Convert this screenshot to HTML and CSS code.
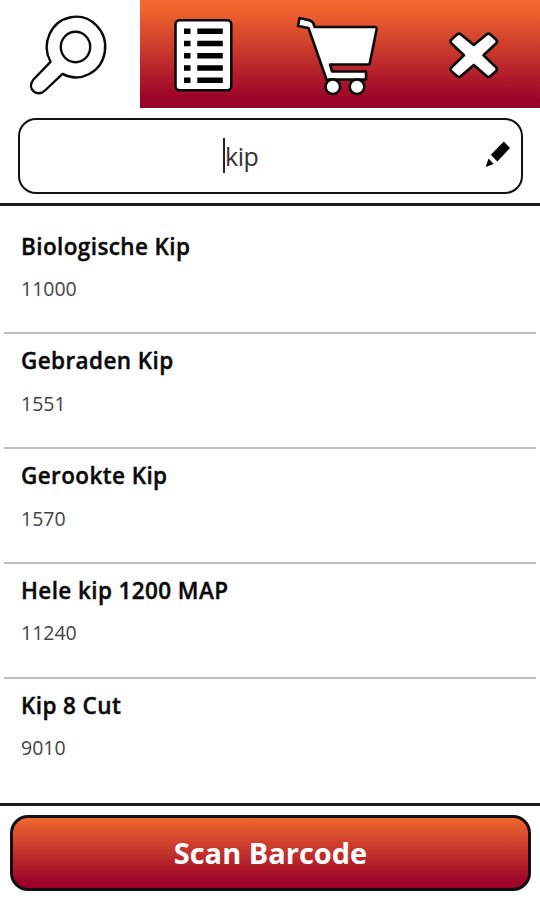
FILE: index.html
```html
<!DOCTYPE html>
<html lang="nl">

<head>
	<meta charset="utf-8">
	<title>Kip</title>
	<link rel="stylesheet" href="styles.css">
</head>

<body>

<nav class="tabs">
	<a class="tab active" href="#" aria-label="Zoeken">
		<svg width="140" height="108" viewBox="0 0 140 108">
			<path class="line" d="M50.5 61.8 A29.2 30.3 0 1 1 62.5 73.9 L45 90.5 C37.5 98 26 89 33.5 79.5 Z"/>
			<ellipse class="line" cx="75.5" cy="47" rx="14.7" ry="15.2"/>
		</svg>
	</a>
	<a class="tab" href="#" aria-label="Lijst">
		<svg width="133" height="108" viewBox="140 0 133 108">
			<rect class="shape" x="175.5" y="20.2" width="55.8" height="70" rx="4"/>
			<path d="M184 28.5h6.5v5.5H184z M184 40.8h6.5v5.5H184z M184 53h6.5v5.5H184z M184 65.3h6.5v5.5H184z M184 77.5h6.5V83H184z"/>
			<path d="M197.3 28.5h25.5v5.5h-25.5z M197.3 40.8h25.5v5.5h-25.5z M197.3 53h25.5v5.5h-25.5z M197.3 65.3h25.5v5.5h-25.5z M197.3 77.5h25.5V83h-25.5z"/>
		</svg>
	</a>
	<a class="tab" href="#" aria-label="Winkelwagen">
		<svg width="134" height="108" viewBox="273 0 134 108">
			<path class="shape" d="M299.5 18 L310 20.5 Q313.5 21.5 314.5 27 L375 27 Q377 27 376.5 30 L369.5 64.5 L330 64.5 L332 71.5 L366 71.5 L366 79.5 L326.5 79.5 L308.5 28 L298 26 Z"/>
			<circle class="shape" cx="332.8" cy="86.7" r="7.3"/>
			<circle class="shape" cx="357" cy="86.7" r="7.3"/>
		</svg>
	</a>
	<a class="tab" href="#" aria-label="Sluiten">
		<svg width="133" height="108" viewBox="407 0 133 108">
			<path class="shape" d="M457 34.5 Q459 32.7 461 34.5 L473.8 45 L486.5 34.5 Q488.5 32.7 490.5 34.5 L496 39.5 Q498 41.5 496 43.5 L483.5 55.3 L496 67.3 Q498 69.3 496 71.3 L490.5 76 Q488.5 77.8 486.5 76 L473.8 65 L461 76 Q459 77.8 457 76 L451.5 71.3 Q449.5 69.3 451.5 67.3 L464 55.3 L451.5 43.5 Q449.5 41.5 451.5 39.5 Z"/>
		</svg>
	</a>
</nav>

<div class="search">
	<div class="field">
		<span class="caret"></span><span class="query">kip</span>
		<svg class="pencil" width="26" height="28" viewBox="484 140 26 28">
			<path d="M503.8 141.5 L510 148 L497.3 161.5 L490.8 154.8 Z M488.5 158.5 L493.7 164 L485.7 167 Z"/>
		</svg>
	</div>
</div>

<ul class="results">
	<li><b class="name">Biologische Kip</b><span class="code">11000</span></li>
	<li><b class="name">Gebraden Kip</b><span class="code">1551</span></li>
	<li><b class="name">Gerookte Kip</b><span class="code">1570</span></li>
	<li><b class="name">Hele kip 1200 MAP</b><span class="code">11240</span></li>
	<li><b class="name">Kip 8 Cut</b><span class="code">9010</span></li>
</ul>

<div class="bottom">
	<button class="scan">Scan Barcode</button>
</div>

</body>

</html>
```
FILE: styles.css
```css
* {
	box-sizing: border-box;
}

body {
	margin: 0;
	width: 540px;
	height: 900px;
	display: flex;
	flex-direction: column;
	overflow: hidden;
	background: #fefefe;
	color: #0a0a0a;
	font-family: "Open Sans", "Noto Sans", sans-serif;
}

/* tabs */
.tabs {
	display: flex;
	height: 108px;
	background: linear-gradient(#f3692f 0, #ee632f 10%, #9b0329 92%, #9b0329 100%);
}

.tab svg {
	display: block;
}

.active {
	background: #fefefe;
}

.line {
	fill: #fefefe;
	stroke: #0a0a0a;
	stroke-width: 2.4;
	stroke-linejoin: round;
}

.shape {
	fill: #fefefe;
	stroke: #0a0a0a;
	stroke-width: 2.6;
	stroke-linejoin: round;
}

/* search */
.search {
	height: 98px;
	padding: 10px 17px 0 18px;
	border-bottom: 3px solid #1c1c1c;
}

.field {
	position: relative;
	display: flex;
	align-items: center;
	height: 76px;
	padding-left: 203px;
	border: 2px solid #111;
	border-radius: 18px;
	font-size: 25px;
}

.caret {
	width: 2px;
	height: 35px;
	margin-bottom: 2px;
	background: #222;
}

.query {
	color: #333;
	letter-spacing: -0.5px;
}

.pencil {
	position: absolute;
	right: 11px;
	top: 20px;
}

/* results */
.results {
	flex: 1;
	margin: 0;
	padding: 13.5px 4px 0;
	list-style: none;
}

.results li {
	height: 114.8px;
	padding: 11px 0 0 17px;
	border-bottom: 2px solid #bdbdbd;
}

.results li:last-child {
	border-bottom: 0;
}

.name {
	display: block;
	font-size: 22.5px;
	font-weight: 600;
	letter-spacing: 0.4px;
	line-height: 32px;
	-webkit-text-stroke: 0.4px #0a0a0a;
}

.code {
	display: block;
	margin-top: 11.5px;
	color: #444;
	font-size: 19.5px;
	line-height: 30px;
}

/* bottom */
.bottom {
	height: 97px;
	padding: 9px 9px 0 10px;
	border-top: 3px solid #1c1c1c;
}

.scan {
	display: block;
	width: 100%;
	height: 76px;
	padding: 0 0 1px;
	border: 3px solid #111;
	border-radius: 18px;
	background: linear-gradient(#f0672f, #9b0329 92%);
	color: #fff;
	font-family: inherit;
	font-size: 29px;
	font-weight: bold;
}
```
